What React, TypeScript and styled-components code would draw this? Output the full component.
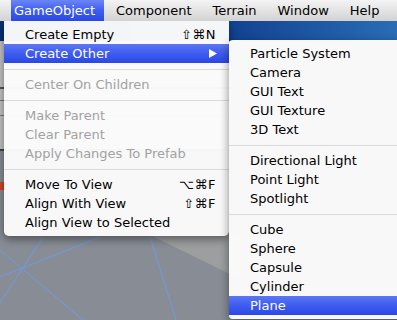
import styled, { createGlobalStyle } from "styled-components";

const GlobalStyle = createGlobalStyle`
    html, body {
        margin: 0;
        padding: 0;
        background: #888c94;
    }
    body {
        font-family: "DejaVu Sans", "Liberation Sans", sans-serif;
        font-size: 13px;
    }
`;

const Screen = styled.div`
    width: 397px;
    height: 320px;
    overflow: hidden;
    display: flex;
    flex-direction: column;
`;

const MenuBar = styled.div`
    height: 21px;
    display: flex;
    gap: 9px;
    padding-left: 11px;
    background: linear-gradient(#f3f3f3, #e2e2e2 55%, #d2d2d2);
    position: relative;
    z-index: 3;
`;

const BarItem = styled.div<{ $active?: boolean }>`
    line-height: 21px;
    padding: 0 9px 0 3px;
    color: ${(p) => (p.$active ? "#fff" : "#000")};
    background: ${(p) =>
        p.$active ? "linear-gradient(#6b86f5, #3e5df0 50%, #2c49e2)" : "transparent"};
`;

const Workspace = styled.div`
    position: relative;
    flex: 1;
`;

const Scene = styled.svg`
    position: absolute;
    inset: 0;
    display: block;
`;

const Menu = styled.div<{ $left: number; $top: number; $width: number; $round: string }>`
    position: absolute;
    left: ${(p) => p.$left}px;
    top: ${(p) => p.$top}px;
    width: ${(p) => p.$width}px;
    background: rgba(252, 252, 252, 0.97);
    border-radius: ${(p) => p.$round};
    box-shadow: 0 3px 10px rgba(0, 0, 0, 0.45);
    padding: 4px 0;
    z-index: 2;
`;

const Item = styled.div<{ $active?: boolean; $disabled?: boolean }>`
    height: 19px;
    line-height: 19px;
    display: flex;
    align-items: center;
    justify-content: space-between;
    padding: 0 13px 0 21px;
    white-space: nowrap;
    color: ${(p) => (p.$active ? "#fff" : p.$disabled ? "#a2a2a2" : "#000")};
    background: ${(p) =>
        p.$active ? "linear-gradient(#5b77f4, #3f5cf0 50%, #2b47e4)" : "transparent"};
`;

const Shortcut = styled.span`
    letter-spacing: 0.5px;
`;

const Separator = styled.div`
    height: 12px;
    display: flex;
    align-items: center;
    &::after {
        content: "";
        flex: 1;
        height: 1px;
        background: #dadada;
    }
`;

const Arrow = styled.svg`
    display: block;
    margin-right: -1px;
`;

type Entry =
    | { sep: true }
    | { label: string; key?: string; disabled?: boolean; active?: boolean; sub?: boolean };

const mainItems: Entry[] = [
    { label: "Create Empty", key: "⇧⌘N" },
    { label: "Create Other", active: true, sub: true },
    { sep: true },
    { label: "Center On Children", disabled: true },
    { sep: true },
    { label: "Make Parent", disabled: true },
    { label: "Clear Parent", disabled: true },
    { label: "Apply Changes To Prefab", disabled: true },
    { sep: true },
    { label: "Move To View", key: "⌥⌘F" },
    { label: "Align With View", key: "⇧⌘F" },
    { label: "Align View to Selected" },
];

const subItems: Entry[] = [
    { label: "Particle System" },
    { label: "Camera" },
    { label: "GUI Text" },
    { label: "GUI Texture" },
    { label: "3D Text" },
    { sep: true },
    { label: "Directional Light" },
    { label: "Point Light" },
    { label: "Spotlight" },
    { sep: true },
    { label: "Cube" },
    { label: "Sphere" },
    { label: "Capsule" },
    { label: "Cylinder" },
    { label: "Plane", active: true },
];

const renderEntries = (list: Entry[]) =>
    list.map((e, i) =>
        "sep" in e ? (
            <Separator key={i} />
        ) : (
            <Item key={i} $active={e.active} $disabled={e.disabled}>
                <span>{e.label}</span>
                {e.key && <Shortcut>{e.key}</Shortcut>}
                {e.sub && (
                    <Arrow width="8" height="9" viewBox="0 0 8 9">
                        <path d="M0 0 L8 4.5 L0 9 Z" fill="#fff" />
                    </Arrow>
                )}
            </Item>
        )
    );

const App = () => {
    return (
        <Screen>
            <GlobalStyle />
            <MenuBar>
                <BarItem $active>GameObject</BarItem>
                <BarItem>Component</BarItem>
                <BarItem>Terrain</BarItem>
                <BarItem>Window</BarItem>
                <BarItem>Help</BarItem>
            </MenuBar>
            <Workspace>
                <Scene width="397" height="299" viewBox="0 0 397 299">
                    <defs>
                        <linearGradient id="band" x1="0" x2="1" y1="0" y2="0">
                            <stop offset="0" stopColor="#0b2f78" />
                            <stop offset="0.55" stopColor="#103f8f" />
                            <stop offset="1" stopColor="#2a6cb6" />
                        </linearGradient>
                    </defs>
                    <rect x="0" y="0" width="397" height="299" fill="#888c94" />
                    <rect x="0" y="0" width="397" height="20" fill="url(#band)" />
                    <rect x="0" y="20" width="230" height="110" fill="#c4c4c4" />
                    <rect x="0" y="66" width="230" height="2" fill="#555" />
                    <rect x="0" y="79" width="230" height="1" fill="#777" />
                    <rect x="0" y="94" width="230" height="1" fill="#777" />
                    <rect x="0" y="128" width="230" height="2" fill="#444" />
                    <polygon points="150,214 240,214 240,258" fill="#9c9ea0" />
                    <rect x="0" y="161" width="6" height="8" fill="#d8432c" />
                    <g stroke="#6f9ae6" strokeWidth="1" fill="none">
                        <line x1="0" y1="229" x2="83" y2="299" />
                        <line x1="43" y1="216" x2="0" y2="282" />
                        <line x1="100" y1="216" x2="0" y2="256" />
                        <line x1="150" y1="216" x2="176" y2="299" />
                    </g>
                </Scene>
                <Menu $left={4} $top={0} $width={225} $round="0 0 5px 5px">
                    {renderEntries(mainItems)}
                </Menu>
                <Menu $left={229} $top={19} $width={180} $round="4px 0 0 4px">
                    {renderEntries(subItems)}
                </Menu>
            </Workspace>
        </Screen>
    );
};

export default App;
